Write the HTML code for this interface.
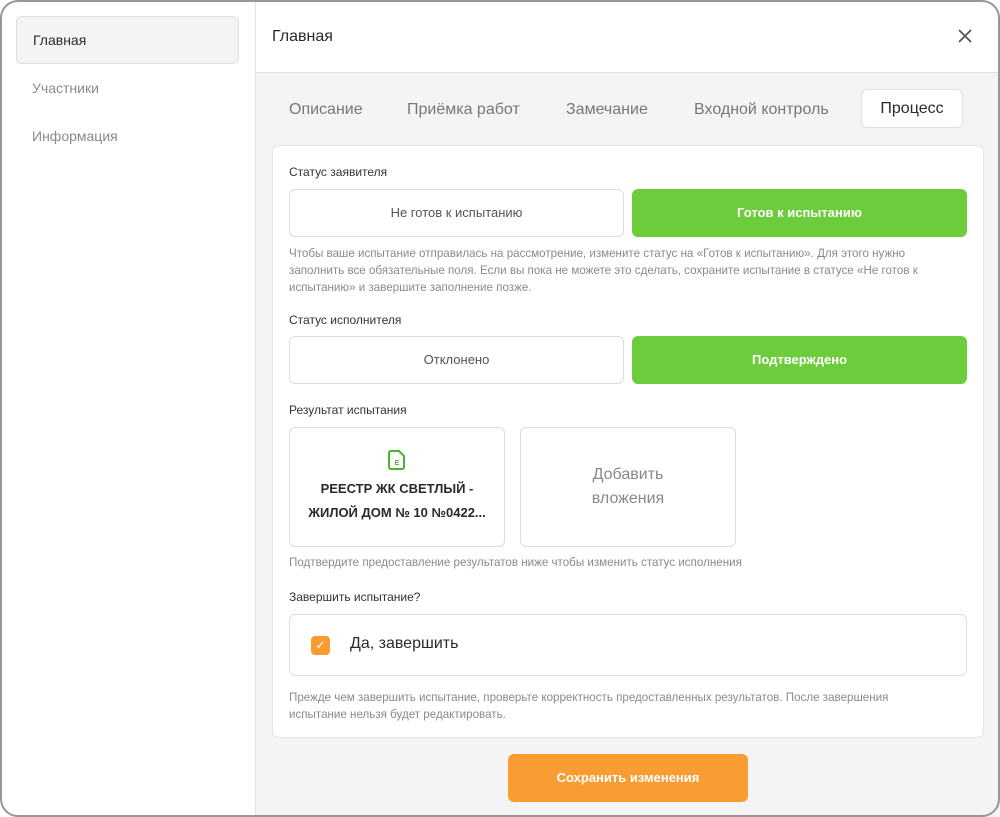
<!DOCTYPE html>
<html><head><meta charset="utf-8"><style>
*{box-sizing:border-box;margin:0;padding:0}
body{width:1000px;height:817px;background:#fff;font-family:"Liberation Sans",sans-serif;overflow:hidden;position:relative}
.frame{position:absolute;left:0;top:0;width:1000px;height:817px;border:2px solid #9a9697;border-radius:18px;z-index:10;pointer-events:none}
.side{position:absolute;left:0;top:0;width:256px;height:817px;border-right:1px solid #e2e2e2;background:#fff}
.nav{position:absolute;left:16px;width:223px;height:48px;font-size:14px;color:#8a8a8a;padding-left:16px;line-height:48px}
.nav.act{background:#f4f4f4;border:1px solid #e0e0e0;border-radius:6px;color:#2a2a2a;line-height:46px}
.main{position:absolute;left:256px;top:0;right:0;bottom:0;background:#f4f4f4}
.head{height:73px;background:#fff;border-bottom:1px solid #e2e2e2;position:relative}
.head .t{position:absolute;left:16px;top:28px;font-size:16px;color:#2a2a2a}
.tab{position:absolute;top:101px;font-size:16px;color:#777}
.tab.act{top:89px;left:861px;width:102px;height:39px;background:#fff;border:1px solid #e0e0e0;border-radius:6px;color:#2a2a2a;text-align:center;line-height:37px}
.card{position:absolute;left:272px;top:145px;width:712px;height:593px;background:#fff;border:1px solid #e4e4e4;border-radius:6px}
.lbl{position:absolute;left:289px;font-size:12px;color:#333}
.btn{position:absolute;height:48px;border-radius:6px;font-size:13px;text-align:center;line-height:48px}
.off{background:#fff;border:1px solid #ddd;color:#555;line-height:46px}
.on{background:#6ccc3c;color:#fff;font-weight:bold}
.hint{position:absolute;left:289px;font-size:11.6px;color:#8a8a8a;line-height:17px;width:664px}
.box{position:absolute;top:427px;width:216px;height:120px;border:1px solid #ddd;border-radius:6px;text-align:center}
</style></head><body>
<div class="side">
<div class="nav act" style="top:16px">Главная</div>
<div class="nav" style="top:64px">Участники</div>
<div class="nav" style="top:112px">Информация</div>
</div>
<div class="main"><div class="head"><div class="t">Главная</div>
<svg style="position:absolute;right:28px;top:29px" width="14" height="14" viewBox="0 0 14 14"><path d="M1 1L13 13M13 1L1 13" stroke="#555" stroke-width="1.8"/></svg></div></div>
<div class="tab" style="left:289px">Описание</div>
<div class="tab" style="left:407px">Приёмка работ</div>
<div class="tab" style="left:566px">Замечание</div>
<div class="tab" style="left:694px">Входной контроль</div>
<div class="tab act">Процесс</div>
<div class="card"></div>
<div class="lbl" style="top:165px">Статус заявителя</div>
<div class="btn off" style="left:289px;top:189px;width:335px">Не готов к испытанию</div>
<div class="btn on" style="left:632px;top:189px;width:335px">Готов к испытанию</div>
<div class="hint" style="top:245px">Чтобы ваше испытание отправилась на рассмотрение, измените статус на «Готов к испытанию». Для этого нужно заполнить все обязательные поля. Если вы пока не можете это сделать, сохраните испытание в статусе «Не готов к испытанию» и завершите заполнение позже.</div>
<div class="lbl" style="top:313px">Статус исполнителя</div>
<div class="btn off" style="left:289px;top:336px;width:335px">Отклонено</div>
<div class="btn on" style="left:632px;top:336px;width:335px">Подтверждено</div>
<div class="lbl" style="top:403px">Результат испытания</div>
<div class="box" style="left:289px">
<svg width="18" height="20" viewBox="0 0 18 20" style="margin-top:22px"><path d="M3 1h8l5 5v11a2 2 0 0 1-2 2H3a2 2 0 0 1-2-2V3a2 2 0 0 1 2-2z" fill="none" stroke="#4cb22c" stroke-width="2"/><text x="9" y="15" font-size="7" font-weight="bold" fill="#4cb22c" text-anchor="middle" font-family="Liberation Sans">E</text></svg>
<div style="font-size:13px;font-weight:bold;color:#2a2a2a;line-height:24px;margin-top:2px">РЕЕСТР ЖК СВЕТЛЫЙ -<br>ЖИЛОЙ ДОМ № 10 №0422...</div></div>
<div class="box" style="left:520px;font-size:16px;color:#888;line-height:24px;padding-top:35px">Добавить<br>вложения</div>
<div class="hint" style="top:554px;width:700px">Подтвердите предоставление результатов ниже чтобы изменить статус исполнения</div>
<div class="lbl" style="top:590px">Завершить испытание?</div>
<div style="position:absolute;left:289px;top:614px;width:678px;height:62px;border:1px solid #ddd;border-radius:6px"></div>
<div style="position:absolute;left:311px;top:636px;width:19px;height:19px;background:#f99d33;border-radius:4px;color:#fff;font-size:12px;text-align:center;line-height:19px">✓</div>
<div style="position:absolute;left:350px;top:635px;font-size:16px;color:#2a2a2a">Да, завершить</div>
<div class="hint" style="top:689px;width:655px">Прежде чем завершить испытание, проверьте корректность предоставленных результатов. После завершения испытание нельзя будет редактировать.</div>
<div style="position:absolute;left:508px;top:754px;width:240px;height:48px;background:#f99d33;border-radius:6px;color:#fff;font-weight:bold;font-size:13px;text-align:center;line-height:48px">Сохранить изменения</div>
<div class="frame"></div>
</body></html>
